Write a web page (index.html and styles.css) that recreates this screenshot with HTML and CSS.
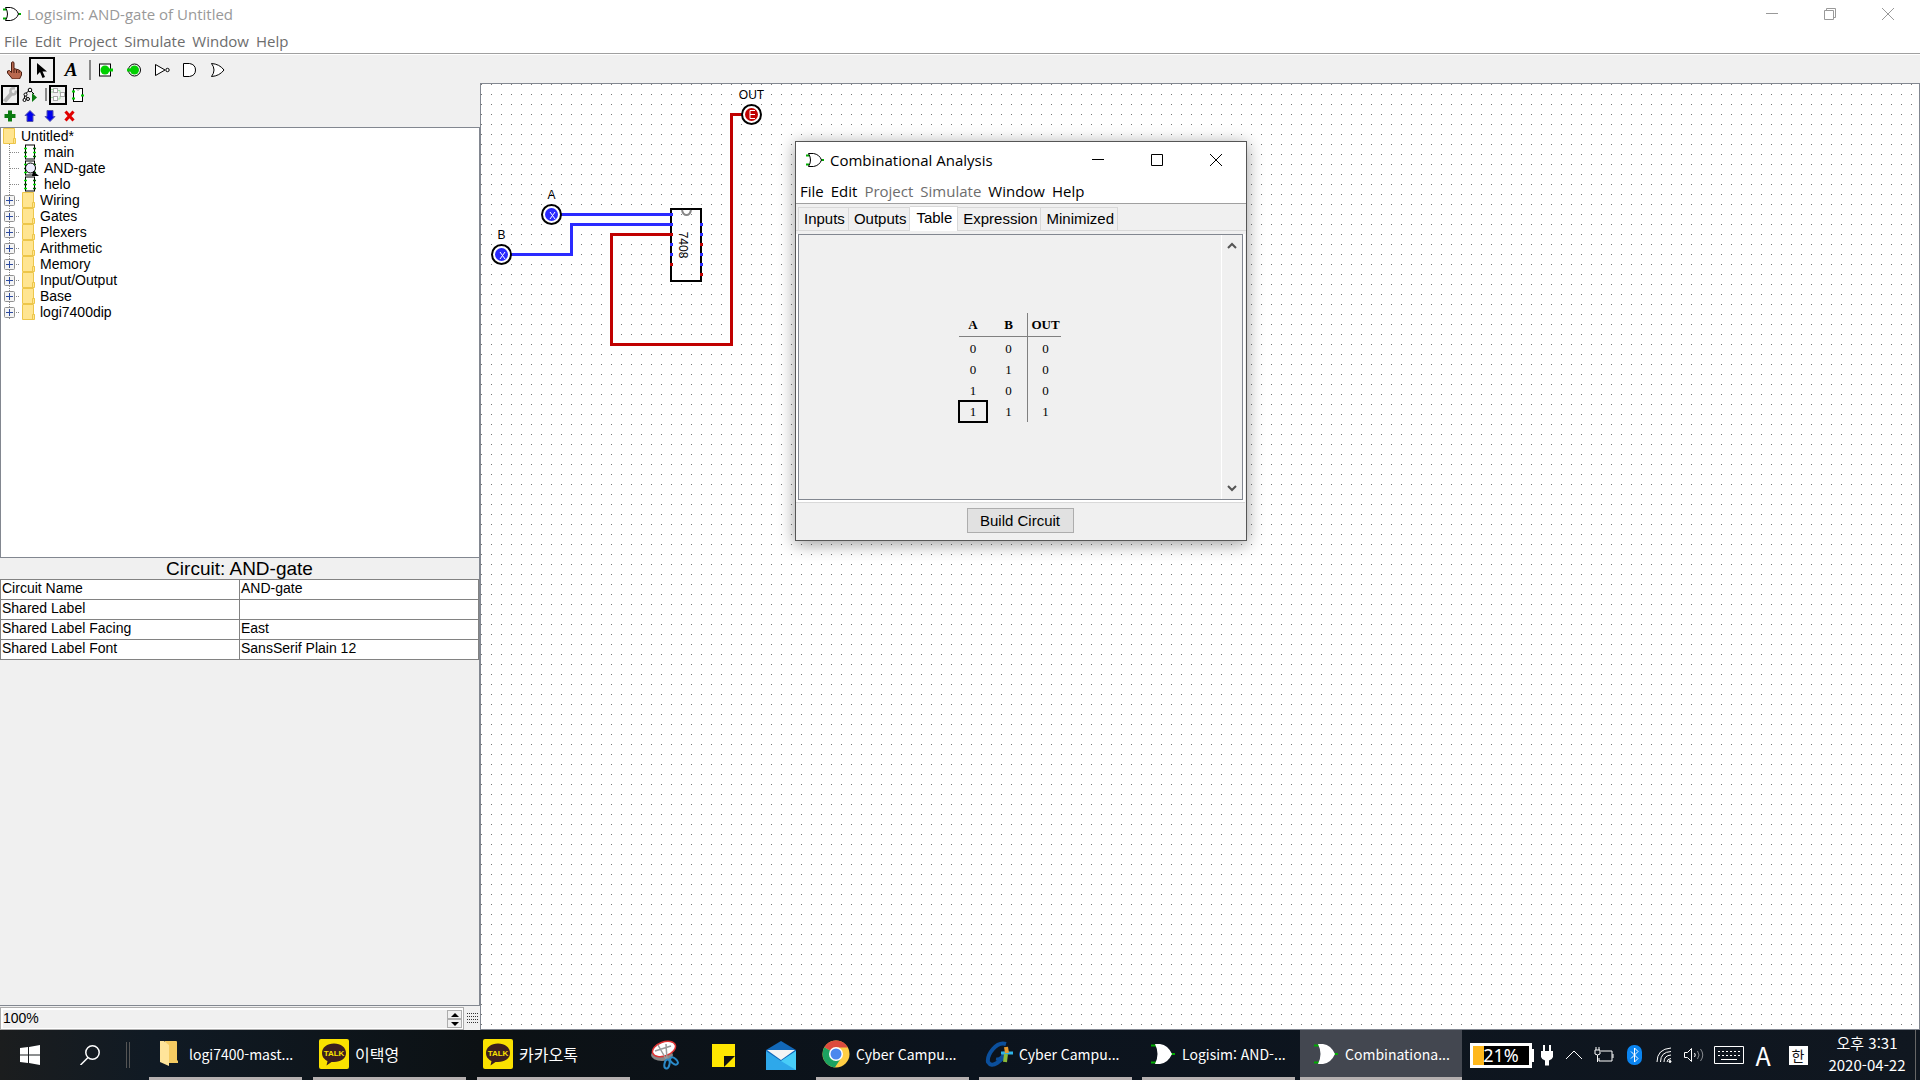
FILE: index.html
```html
<!DOCTYPE html>
<html lang="ko">
<head>
<meta charset="utf-8">
<title>Logisim: AND-gate of Untitled</title>
<link rel="stylesheet" href="styles.css">
</head>
<body>
<svg class="defs" aria-hidden="true">
  <defs>
    <symbol id="logo" viewBox="0 0 18 14">
      <path d="M0 2.500h4M0 11.500h4M15 7h3" stroke="#0a0" stroke-width="2"/>
      <path d="M2.500 .5h5q6 1 8 6.500q-2 5.500-8 6.500h-5q4-6.500 0-13z" fill="#fff" stroke="#000"/>
    </symbol>
    <symbol id="gate-white" viewBox="0 0 24 22">
      <path d="M0 2.500h5M0 19.500h5M20 11h4" stroke="#0a0" stroke-width="2"/>
      <path d="M4 1h5q8 1 12 10q-4 9-12 10h-5q5-10 0-20z" fill="#fff"/>
    </symbol>
    <symbol id="folder" viewBox="0 0 13 16">
      <path d="M.5.500h11v10h1v5h-12z" fill="#ffe591" stroke="#edc64a"/>
      <path d="M10.500 15v-4.500h2" fill="none" stroke="#edc64a"/>
    </symbol>
    <symbol id="branch" viewBox="0 0 40 16">
      <path d="M9.500 0v16M10 8.500h10" stroke="#888" stroke-dasharray="1 1"/>
      <rect x="4.500" y="3.500" width="10" height="10" rx="1" fill="#f4f4f4" stroke="#919191"/>
      <path d="M6 8.500h7M9.500 5v7" stroke="#2b4aa0"/>
      <use href="#folder" x="22" y="0" width="13" height="16"/>
    </symbol>
    <symbol id="leaf" viewBox="0 0 44 16">
      <path d="M9.500 0v16M10 8.500h10" stroke="#888" stroke-dasharray="1 1"/>
      <rect x="25.500" y="1" width="9" height="14" fill="#fff" stroke="#000"/>
      <path d="M24 4.500h3M24 12.500h3M33 8.500h3" stroke="#0d0" stroke-width="1.500"/>
      <path d="M24 8.500h3M33 4.500h3M33 12.500h3" stroke="#060" stroke-width="1.500"/>
    </symbol>
    <symbol id="talk" viewBox="0 0 30 30">
      <rect width="30" height="30" rx="2" fill="#fae100"/>
      <path d="M15 4.500c-7 0-12 4-12 9.500 0 4 2.500 6.500 5.500 8l-1 4.500 5-3.500h2.500c7 0 12-3.500 12-9s-5-9.500-12-9.500z" fill="#3b1e1e"/>
      <text x="15" y="17" class="talk-text">TALK</text>
    </symbol>
  </defs>
</svg>

<main class="app">
  <header class="titlebar">
    <svg class="logo"><use href="#logo"/></svg>
    <h1>Logisim: AND-gate of Untitled</h1>
    <div class="caption">
      <button aria-label="Minimize"><svg width="12" height="12"><path d="M0 5.500h12"/></svg></button>
      <button aria-label="Restore"><svg width="12" height="12"><path d="M.5 2.500h9v9h-9zM2.500 2.500v-2h9v9h-2"/></svg></button>
      <button aria-label="Close"><svg width="12" height="12"><path d="M0 0l12 12M12 0l-12 12"/></svg></button>
    </div>
  </header>
  <nav class="menubar inactive">
    <button>File</button><button>Edit</button><button>Project</button><button>Simulate</button><button>Window</button><button>Help</button>
  </nav>

  <div class="toolbar">
    <button aria-label="Poke"><svg width="16" height="18"><path d="M5.500 1.500q1.500-1.500 2.500 0v6l5 1.500 2.500 2v3l-2 4h-7l-5-6v-2l2-.5 2 2z" fill="#b9694f" stroke="#4a1d10"/><path d="M8 8v4M10.500 9v3M13 10v2" stroke="#4a1d10"/></svg></button>
    <button class="picked" aria-label="Select"><svg width="12" height="18"><path d="M1 2v12l3-3 2.500 6 2.500-1-2.500-5.500h4.500z"/></svg></button>
    <button class="text-tool" aria-label="Text">A</button>
    <i class="rule"></i>
    <button aria-label="Input pin"><svg width="14" height="14"><rect x=".5" y="1" width="11" height="12" fill="#fff" stroke="#000"/><circle cx="6" cy="7" r="4.500" fill="#00d000"/><path d="M9 7h5" stroke="#00d000" stroke-width="3"/></svg></button>
    <button aria-label="Output pin"><svg width="14" height="14"><circle cx="7.500" cy="7" r="6" fill="#fff" stroke="#000"/><circle cx="7.500" cy="7" r="4.500" fill="#00d000"/><path d="M0 7h5" stroke="#00d000" stroke-width="3"/></svg></button>
    <button aria-label="NOT gate"><svg width="15" height="14"><path d="M.5 1.500v11l9.500-5.500z" fill="#fff" stroke="#000"/><circle cx="12.500" cy="7" r="1.700" fill="#fff" stroke="#000"/></svg></button>
    <button aria-label="AND gate"><svg width="14" height="14"><path d="M.5.500h6q6 1 6 6.500t-6 6.500h-6z" fill="#fff" stroke="#000"/></svg></button>
    <button aria-label="OR gate"><svg width="14" height="14"><path d="M.5.500q8 .5 12.500 6.500-4.500 6-12.500 6.500 5-6.500 0-13z" fill="#fff" stroke="#000"/></svg></button>
  </div>

  <div class="workspace">
    <aside class="explorer">
      <div class="mini-bar">
        <button class="boxed" aria-label="Edit circuit"><svg width="14" height="16" fill="none" stroke="#b4b4b4"><path d="M1.500 14.500l7-8" stroke-width="4"/><path d="M12 1.500q-4-1-4.500 2t2.500 4q3 0 3-4" stroke-width="2.500"/></svg></button>
        <button aria-label="Simulation"><svg width="16" height="16"><path d="M8 3l-5 4-1 6M8 3l4 4M3 8l3 4" stroke="#000" fill="none"/><g fill="#fff" stroke="#000"><circle cx="8" cy="3" r="1.800"/><circle cx="3.500" cy="7.500" r="1.500"/><circle cx="2.500" cy="13" r="1.500"/><circle cx="6" cy="12" r="1.500"/></g><path d="M10 6v9l5-4.500z" fill="#0a7a10"/></svg></button>
        <i class="rule small"></i>
        <button class="boxed" aria-label="Layout"><svg width="14" height="16" fill="#fff"><path d="M0 2.500h3M0 10.500h3" stroke="#9dde9d"/><path d="M0 5h2M7 3.500h2v3h2M7 12h2v-3h2" stroke="#9dde9d" fill="none"/><g stroke="#aaa"><rect x="2.500" y="1.500" width="4" height="4"/><rect x="2.500" y="9.500" width="4" height="4"/><rect x="9.500" y="5.500" width="4" height="4"/></g></svg></button>
        <button aria-label="Appearance"><svg width="14" height="16"><rect x="2.500" y="1.500" width="9" height="13" fill="#fff" stroke="#000"/><path d="M5.500 2q1.500 3 3 0" fill="none" stroke="#888"/><path d="M1 4.500h3M1 11.500h3M10 8.500h3" stroke="#0c0" stroke-width="2"/></svg></button>
      </div>
      <div class="mini-bar actions">
        <button aria-label="Add circuit"><svg width="12" height="12"><path d="M6 .5v11M.5 6h11" stroke="#0a7a10" stroke-width="4"/></svg></button>
        <button aria-label="Move up"><svg width="12" height="12"><path d="M6 .5l5 5h-2v6h-6v-6h-2z" fill="#00e" stroke="#55a"/></svg></button>
        <button aria-label="Move down"><svg width="12" height="12"><path d="M6 11.500l5-5h-2v-6h-6v6h-2z" fill="#00e" stroke="#55a"/></svg></button>
        <button aria-label="Remove"><svg width="12" height="12"><path d="M1.500 1.500l8 9M9.500 1.500l-8 9" stroke="#e00000" stroke-width="3"/></svg></button>
      </div>
      <ul class="tree">
        <li><svg class="root-icon"><use href="#folder"/></svg>Untitled*</li>
        <li><svg class="leaf"><use href="#leaf"/></svg>main</li>
        <li><svg class="leaf"><use href="#leaf"/><circle cx="30.500" cy="8" r="5" fill="#eef" stroke="#000"/><path d="M33 11l6 5h-7z"/></svg>AND-gate</li>
        <li><svg class="leaf"><use href="#leaf"/></svg>helo</li>
        <li><svg class="branch"><use href="#branch"/></svg>Wiring</li>
        <li><svg class="branch"><use href="#branch"/></svg>Gates</li>
        <li><svg class="branch"><use href="#branch"/></svg>Plexers</li>
        <li><svg class="branch"><use href="#branch"/></svg>Arithmetic</li>
        <li><svg class="branch"><use href="#branch"/></svg>Memory</li>
        <li><svg class="branch"><use href="#branch"/></svg>Input/Output</li>
        <li><svg class="branch"><use href="#branch"/></svg>Base</li>
        <li><svg class="branch"><use href="#branch"/></svg>logi7400dip</li>
      </ul>
      <section class="attributes">
        <h2>Circuit: AND-gate</h2>
        <table>
          <tr><th scope="row">Circuit Name</th><td>AND-gate</td></tr>
          <tr><th scope="row">Shared Label</th><td></td></tr>
          <tr><th scope="row">Shared Label Facing</th><td>East</td></tr>
          <tr><th scope="row">Shared Label Font</th><td>SansSerif Plain 12</td></tr>
        </table>
      </section>
      <div class="zoombar">
        <div class="zoombox">
          <input type="text" value="100%" aria-label="Zoom">
          <div class="spin">
            <button aria-label="Zoom in"><svg width="8" height="4"><path d="M0 4l4-4 4 4z"/></svg></button>
            <button aria-label="Zoom out"><svg width="8" height="4"><path d="M0 0l4 4 4-4z"/></svg></button>
          </div>
        </div>
        <button class="grid-toggle" aria-label="Show grid"><svg width="11" height="11"><path d="M0 .5h11M0 3.500h11M0 6.500h11M0 9.500h11" stroke="#333" stroke-dasharray="1 1"/></svg></button>
      </div>
    </aside>

    <section class="canvas" aria-label="Circuit canvas">
      <svg width="100%" height="100%">
        <defs><pattern id="dots" width="10" height="10" patternUnits="userSpaceOnUse"><rect width="1" height="1" fill="#777"/></pattern></defs>
        <rect width="100%" height="100%" fill="url(#dots)"/>
        <rect x="190" y="125" width="30" height="72" fill="none" stroke="#000" stroke-width="2"/>
        <path d="M201 126q1 5 4.500 5t4.500-5" fill="none" stroke="#888" stroke-width="2"/>
        <g fill="none" stroke-width="3">
          <path d="M80 130.500h112M30 170.500h60.500v-30h101.500M189 160.500h3M189 170.500h3M219 140.500h3M219 150.500h3M219 170.500h3M219 180.500h3" stroke="#2a2aff"/>
          <path d="M192 150.500h-61.500v110h120v-230h12M189 180.500h3M219 160.500h3M219 190.500h3" stroke="#c00000"/>
        </g>
        <g fill="#fff" stroke="#000" stroke-width="2">
          <circle cx="70.500" cy="130.500" r="9.500"/><circle cx="20.500" cy="170.500" r="9.500"/><circle cx="270.500" cy="30.500" r="9.500"/>
        </g>
        <circle cx="70.500" cy="130.500" r="6.500" fill="#2a2aff"/><circle cx="20.500" cy="170.500" r="6.500" fill="#2a2aff"/><circle cx="270.500" cy="30.500" r="6.500" fill="#c00000"/>
        <path d="M69 128l5 7M74 128l-5 7M19 168l5 7M24 168l-5 7M274 26.500h-5v8h5M269 30.500h5" fill="none" stroke="#fff"/>
        <text x="70.500" y="115">A</text>
        <text x="20.500" y="155">B</text>
        <text x="270.500" y="15">OUT</text>
        <text x="161" y="-198" transform="rotate(90)">7408</text>
      </svg>
    </section>
  </div>
</main>

<section class="dialog" role="dialog" aria-label="Combinational Analysis">
  <header class="dialog-title">
    <svg class="logo"><use href="#logo"/></svg>
    <h2>Combinational Analysis</h2>
    <div class="caption">
      <button aria-label="Minimize"><svg width="12" height="12"><path d="M0 5.500h12"/></svg></button>
      <button aria-label="Maximize"><svg width="12" height="12"><path d="M.5.500h11v11h-11z"/></svg></button>
      <button aria-label="Close"><svg width="12" height="12"><path d="M0 0l12 12M12 0l-12 12"/></svg></button>
    </div>
  </header>
  <nav class="menubar">
    <button>File</button><button>Edit</button><button disabled>Project</button><button disabled>Simulate</button><button>Window</button><button>Help</button>
  </nav>
  <div class="tabs" role="tablist">
    <button role="tab">Inputs</button><button role="tab">Outputs</button><button role="tab" class="current" aria-selected="true">Table</button><button role="tab">Expression</button><button role="tab">Minimized</button>
  </div>
  <div class="pane">
    <div class="pane-body">
      <table class="truth">
        <thead><tr><th>A</th><th>B</th><th>OUT</th></tr></thead>
        <tbody>
          <tr><td>0</td><td>0</td><td>0</td></tr>
          <tr><td>0</td><td>1</td><td>0</td></tr>
          <tr><td>1</td><td>0</td><td>0</td></tr>
          <tr><td><span class="cursor">1</span></td><td>1</td><td>1</td></tr>
        </tbody>
      </table>
    </div>
    <div class="scroll">
      <button aria-label="Scroll up"><svg width="10" height="8"><path d="M1 6l4-4 4 4"/></svg></button>
      <button aria-label="Scroll down"><svg width="10" height="8"><path d="M1 2l4 4 4-4"/></svg></button>
    </div>
  </div>
  <footer><button class="build">Build Circuit</button></footer>
</section>

<footer class="taskbar">
  <button class="slot wide" aria-label="Start"><svg width="20" height="20" fill="#fff"><path d="M0 3l8-1v7.500h-8zM9 2l11-2v9.500h-11zM0 10.500h8v7.500l-8-1zM9 10.500h11v9.500l-11-2z"/></svg></button>
  <button class="slot wide" aria-label="Search"><svg width="20" height="20" fill="none" stroke="#fff" stroke-width="1.500"><circle cx="12.500" cy="7.500" r="6.700"/><path d="M8 12.500l-7.500 7.500"/></svg></button>
  <i class="grip"></i>
  <div class="tasks folders">
    <button class="task"><svg class="pad" width="18" height="27"><path d="M5 1h11q1 0 1 1v18l1 1v2h-13z" fill="#f5cb62"/><path d="M0 1h4l5 4v21l-9-4z" fill="#ffe49a"/></svg>logi7400-mast...</button>
    <button class="task chat"><svg width="30" height="30"><use href="#talk"/></svg>이택영</button>
    <button class="task chat"><svg width="30" height="30"><use href="#talk"/></svg>카카오톡</button>
  </div>
  <div class="pins">
    <button class="slot pin" aria-label="Snipping tool"><svg width="30" height="30"><ellipse cx="12" cy="15" rx="11" ry="6" fill="#888"/><ellipse cx="14" cy="9" rx="12" ry="7" transform="rotate(-20 14 9)" fill="#fff" stroke="#d33" stroke-width="1.500"/><path d="M8 5l8 14M16 4l1 16M5 11l16-5" stroke="#999" stroke-width="1.500"/><g fill="none" stroke="#2a8ac8" stroke-width="2"><ellipse cx="17" cy="24" rx="2.500" ry="4.500" transform="rotate(12 17 24)"/><ellipse cx="24" cy="21" rx="2.500" ry="4.500" transform="rotate(-50 24 21)"/></g></svg></button>
    <button class="slot pin" aria-label="Sticky notes"><svg width="23" height="23"><path d="M0 0h23v23h-23z" fill="#ffe600"/><path d="M12 23v-11h11z" fill="#111"/><path d="M14 23l9-10v10z" fill="#ffe600"/></svg></button>
    <button class="slot pin" aria-label="Mail"><svg width="30" height="29"><path d="M0 9l15-9 15 9v20h-30z" fill="#1268b8"/><path d="M0 10l15 10 15-10v19h-30z" fill="#2ea8ea"/><path d="M15 20l15-10v19z" fill="#48cdf8"/><path d="M1 9h28l-14 10z" fill="#f4f4f4"/></svg></button>
  </div>
  <div class="tasks">
    <button class="task"><svg width="28" height="28"><circle cx="14" cy="14" r="13.500" fill="#ffce44"/><path d="M14 14l-11.700-6.700a13.500 13.500 0 0 1 23.500.2h-11.800z" fill="#dc4b3e"/><path d="M14 14l-11.700-6.700a13.500 13.500 0 0 0 10.500 20.100l7-10.400z" fill="#1ca261"/><circle cx="14" cy="14" r="7" fill="#fff"/><circle cx="14" cy="14" r="5.500" fill="#4a87ee"/></svg>Cyber Campu...</button>
    <button class="task"><svg width="28" height="28" fill="none"><path d="M21 4q-7-2-13 5t-5 13q3 5 9 1t8-10" stroke="#0b4f9c" stroke-width="4"/><path d="M11 19q5 1 9-7" stroke="#0b4f9c" stroke-width="3"/><path d="M16 13h12" stroke="#2fb4e8" stroke-width="3"/><path d="M21 7l1 6" stroke="#e69a2e" stroke-width="4"/><path d="M21 14l-1 8" stroke="#8dbb3a" stroke-width="4"/></svg>Cyber Campu...</button>
    <button class="task"><svg class="gate" width="24" height="22"><use href="#gate-white"/></svg>Logisim: AND-...</button>
  </div>
  <button class="task active"><svg class="gate" width="24" height="22"><use href="#gate-white"/></svg>Combinationa...</button>
  <div class="tray">
    <span class="battery">21%</span>
    <span class="slot plug"><svg width="12" height="22" fill="#fff"><path d="M2 1h2v6h-2zM8 1h2v6h-2zM0 7h12v6q-1 3-4 3.500v5h-4v-5q-3-.5-4-3.500z"/></svg></span>
    <button class="slot" aria-label="Hidden icons"><svg width="16" height="10" class="line"><path d="M0 9l8-8 8 8"/></svg></button>
    <span class="slot"><svg width="20" height="16" class="line"><path d="M7 4h11v10h-13v-3M19 7v4M3.500 8v7M1 3h5v4q-2.500 2-5 0zM2 0v3M5 0v3"/></svg></span>
    <button class="slot" aria-label="Bluetooth"><svg width="15" height="20"><rect width="15" height="20" rx="7" fill="#0a84f0"/><path d="M4 6.500l7 7-3.500 3.500v-14l3.500 3.500-7 7" fill="none" stroke="#fff"/></svg></button>
    <button class="slot" aria-label="Wi-Fi"><svg width="16" height="16" class="line"><path d="M1 15q0-13 14-14M4.500 15q0-10 10.500-10.500M8 15q0-6.500 7-7M11 15q0-3 4-3.500"/><circle cx="14" cy="14.500" r="1" fill="#fff"/></svg></button>
    <button class="slot" aria-label="Volume"><svg width="20" height="16" class="line"><path d="M.5 5.500h3l4-4v13l-4-4h-3zM10.500 6q1.500 2 0 4"/><path d="M13.500 4q3 4 0 8M16.500 2q4.500 6 0 12" opacity=".5"/></svg></button>
    <button class="slot keys" aria-label="Touch keyboard"><svg width="30" height="18" class="line"><path d="M.5.500h29v17h-29zM7 13.500h16"/><path d="M4 5.500h22M4 9.500h22" stroke-dasharray="2 2"/></svg></button>
    <button class="slot latin">A</button>
    <button class="slot ime"><span>한</span></button>
    <button class="clock"><span>오후 3:31</span><span>2020-04-22</span></button>
  </div>
</footer>
</body>
</html>
```
FILE: styles.css
```css
* { box-sizing: border-box; }

body {
  margin: 0;
  height: 100vh;
  display: flex;
  flex-direction: column;
  overflow: hidden;
  background: #f0f0f0;
  color: #000;
  font: 14px/16px "Liberation Sans", "Noto Sans CJK KR", sans-serif;
}

h1, h2 { margin: 0; font-weight: normal; }

button {
  margin: 0;
  padding: 0;
  border: 0;
  background: none;
  color: inherit;
  font: inherit;
  display: flex;
  align-items: center;
  justify-content: center;
}

svg { display: block; flex: none; }
.defs { position: absolute; width: 0; height: 0; }
.logo { width: 18px; height: 14px; }

/* main window */
.app { flex: 1; min-height: 0; display: flex; flex-direction: column; }

.titlebar, .dialog-title { display: flex; align-items: center; background: #fff; }
.titlebar { height: 28px; padding-left: 3px; gap: 6px; color: #999; }
.titlebar h1, .dialog-title h2 { font: 15px/20px "Open Sans", sans-serif; }

.caption { margin-left: auto; display: flex; }
.caption button { width: 58px; height: 28px; }
.titlebar .caption { padding-right: 3px; }
.caption svg { fill: none; stroke: currentColor; }

.menubar {
  display: flex;
  gap: 7px;
  height: 26px;
  padding: 0 4px;
  background: #fff;
  border-bottom: 1px solid #a0a0a0;
  font: 15px/24px "Open Sans", sans-serif;
}
.menubar.inactive, .menubar button:disabled { color: #6d6d6d; }
.menubar button { height: 25px; }

.toolbar { display: flex; align-items: center; height: 30px; border-top: 1px solid #fff; }
.toolbar button { width: 28px; height: 26px; }
.toolbar .picked { width: 26px; margin-left: 1px; margin-right: 2px; border: 2px solid #000; }
.toolbar .text-tool { font: italic bold 19px/20px "Liberation Serif", serif; }
.rule { width: 2px; height: 20px; margin: 0 1px 0 4px; background: #888; }
.rule.small { height: 13px; margin: 0 2px 0 6px; }

.workspace { flex: 1; min-height: 0; display: flex; }
.explorer { width: 25%; display: flex; flex-direction: column; }

.mini-bar { display: flex; align-items: center; height: 21px; padding-left: 1px; }
.mini-bar button { width: 18px; height: 20px; }
.mini-bar .boxed { border: 2px solid #000; }
.mini-bar button + button { margin-left: 2px; }
.actions { height: 22px; }

.tree {
  flex: 430 1 0;
  margin: 0;
  padding: 0;
  list-style: none;
  background: #fff;
  border: 1px solid #828790;
}
.tree li { display: flex; align-items: center; height: 16px; }
.root-icon { width: 13px; height: 16px; margin: 0 5px 0 2px; }
.leaf { width: 44px; height: 16px; margin-left: -1px; }
.branch { width: 40px; height: 16px; margin-left: -1px; }

.attributes { flex: 449 1 0; border-right: 1px solid #828790; border-bottom: 1px solid #828790; }
.attributes h2 { font-size: 19px; line-height: 21px; text-align: center; }
.attributes table { width: 100%; table-layout: fixed; border-collapse: collapse; background: #fff; }
.attributes th, .attributes td {
  height: 20px;
  padding: 0 1px 2px;
  border: 1px solid #828282;
  font-weight: normal;
  line-height: 16px;
  text-align: left;
}

.zoombar { display: flex; height: 24px; padding-top: 1px; }
.zoombox { flex: 1; min-width: 0; display: flex; border: 1px solid #adadad; padding: 2px 1px 1px 2px; background: #fff; }
.zoombox input { flex: 1; min-width: 0; padding: 0 0 2px; border: 0; background: #f0f0f0; font: inherit; }
.spin { display: flex; flex-direction: column; width: 15px; }
.spin button { flex: 1; border: 1px solid #adadad; background: #f0f0f0; }
.grid-toggle { width: 16px; }

.canvas { flex: 1; min-width: 0; background: #fff; border: 1px solid #828790; margin-top: -1px; }
.canvas text { font: 12px "Liberation Sans", sans-serif; text-anchor: middle; }

/* floating analysis window */
.dialog {
  position: absolute;
  left: 795px;
  top: 141px;
  width: 452px;
  display: flex;
  flex-direction: column;
  background: #f0f0f0;
  border: 1px solid #555;
  box-shadow: 0 3px 16px rgba(0, 0, 0, .4);
}
.dialog-title { height: 36px; padding-left: 10px; gap: 6px; }
.dialog-title .caption { padding-right: 1px; }
.dialog-title .caption button { width: 59px; }

.tabs { display: flex; align-items: flex-end; height: 27px; padding: 0 2px; border-bottom: 1px solid #d9d9d9; }
.tabs button {
  height: 23px;
  padding: 0 3px 0 5px;
  border: 1px solid #d9d9d9;
  border-bottom: 0;
  font-size: 15px;
}
.tabs button + button { border-left: 0; }
.tabs button.current { height: 25px; margin-bottom: -1px; padding: 0 5px 3px 6px; background: #fff; }

.pane { display: flex; height: 266px; margin: 3px 3px 0 2px; border: 1px solid #828790; box-shadow: 0 0 0 2px #fff, 0 0 0 3px #d9d9d9; clip-path: inset(0 -2px -3px -2px); }
.pane-body { flex: 1; display: flex; align-items: center; justify-content: center; }
.scroll { width: 21px; display: flex; flex-direction: column; justify-content: space-between; border-left: 1px solid #fff; }
.scroll button { height: 22px; }
.scroll svg { fill: none; stroke: #555; stroke-width: 2; }

.truth { border-collapse: separate; border-spacing: 0; font: 13px/21px "Liberation Serif", serif; text-align: center; }
.truth th { height: 24px; padding: 0; border-bottom: 1px solid #808080; }
.truth td { height: 21px; padding: 0; }
.truth tbody tr:first-child td { height: 22px; padding-top: 1px; }
.truth th:nth-child(1), .truth td:nth-child(1) { width: 35px; padding-right: 7px; }
.truth th:nth-child(2), .truth td:nth-child(2) { width: 34px; padding-right: 4px; border-right: 1px solid #808080; }
.truth th:nth-child(3), .truth td:nth-child(3) { width: 33px; padding-left: 2px; }
.cursor { display: block; width: 26px; height: 19px; margin: 0 1px; line-height: 19px; outline: 2px solid #000; }

.dialog footer { display: flex; justify-content: center; padding: 8px 2px 7px 0; }
.build { width: 107px; height: 25px; border: 1px solid #adadad; background: #e1e1e1; font-size: 15px; }

/* taskbar */
.taskbar {
  display: flex;
  height: 50px;
  background: linear-gradient(90deg, #1b1d1e, #101a24 8%, #0c1114 25%, #0b131d 50%, #101720);
  color: #fff;
  font: 14px/20px "Noto Sans CJK KR", sans-serif;
}
.slot { width: 30px; }
span.slot { display: flex; align-items: center; justify-content: center; }
.wide { width: 60px; }
.grip { align-self: center; width: 4px; height: 26px; margin: 0 19px 0 6px; border: 1px solid #555; border-width: 0 1px; }
.tasks { display: flex; gap: 10px; }
.tasks.folders { gap: 11px; }
.task { width: 153px; padding-left: 6px; gap: 6px; justify-content: flex-start; border-bottom: 3px solid #b5b0b0; white-space: nowrap; }
.task .pad { margin: 0 5px; }
.task .gate { margin: 0 1px 0 3px; }
.chat { font-size: 16px; }
.pins { display: flex; padding: 0 6px; }
.pin { width: 58px; }
.task.active { width: 162px; margin-left: 5px; padding-left: 11px; background: #434750; }

.tray { display: flex; align-items: center; margin-left: auto; padding-right: 4px; }
.tray .slot { height: 50px; }
.tray .plug { width: 25px; }
.line { fill: none; stroke: #fff; }
.battery {
  position: relative;
  width: 62px;
  height: 25px;
  margin-right: 2px;
  border: 3px solid #fff;
  background: linear-gradient(90deg, #ffb81c 11px, #000 11px);
  font: 18px/19px "Noto Sans", sans-serif;
  text-align: center;
}
.battery::after {
  content: "";
  position: absolute;
  right: -5px;
  top: 3px;
  width: 2px;
  height: 13px;
  background: #fff;
}
.tray .keys { width: 40px; }
.tray .latin { width: 28px; font-size: 25px; }
.tray .ime { width: 42px; }
.ime span { width: 19px; height: 19px; background: #fff; color: #111; line-height: 18px; }
.clock { flex-direction: column; width: 97px; height: 50px; gap: 2px; padding-bottom: 2px; border-right: 1px solid #666; font-size: 15px; }

.talk-text { font: bold 8px "Liberation Sans", sans-serif; fill: #fae100; text-anchor: middle; }
```
